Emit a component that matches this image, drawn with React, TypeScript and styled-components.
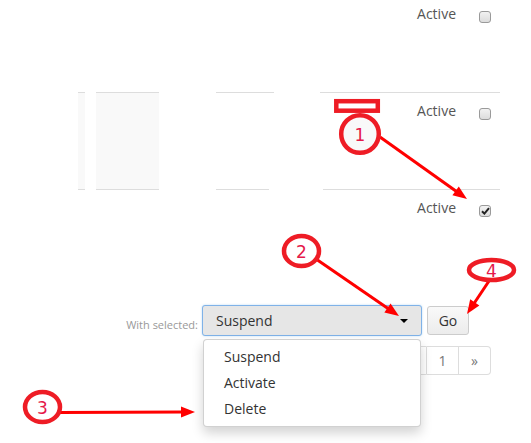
import React from "react";
import styled, { createGlobalStyle } from "styled-components";

const Global = createGlobalStyle`
  html, body { margin: 0; padding: 0; background: #fff; }
  body {
    font-family: "Open Sans", "Liberation Sans", sans-serif;
    color: #333;
    width: 531px;
    height: 443px;
    overflow: hidden;
  }
`;

const Page = styled.div`
  position: relative;
  width: 531px;
  height: 443px;
  overflow: hidden;
`;

const Table = styled.div`
  display: flex;
  flex-direction: column;
`;

const Row = styled.div<{ $h: number }>`
  display: flex;
  height: ${(p) => p.$h}px;
`;

const Segment = styled.div<{ $left: number; $w: number; $line?: boolean; $fill?: boolean }>`
  box-sizing: border-box;
  margin-left: ${(p) => p.$left}px;
  width: ${(p) => p.$w}px;
  border-top: ${(p) => (p.$line ? "1px solid #ddd" : "none")};
  background: ${(p) => (p.$fill ? "#f9f9f9" : "transparent")};
`;

const StatusCell = styled(Segment)<{ $pt: number }>`
  display: flex;
  justify-content: flex-end;
  align-items: flex-start;
  padding: ${(p) => p.$pt}px 9px 0 0;
`;

const Status = styled.span`
  font-size: 14px;
  line-height: 20px;
  color: #555;
`;

const Check = styled.span<{ $checked?: boolean }>`
  box-sizing: border-box;
  display: flex;
  align-items: center;
  justify-content: center;
  width: 12px;
  height: 12px;
  margin: 7px 0 0 23px;
  border: 1px solid #9a9a9a;
  border-radius: 3px;
  background: linear-gradient(#f2f2f2, #dcdcdc);
`;

const FormBar = styled.div`
  display: flex;
  justify-content: flex-end;
  align-items: stretch;
  height: 31px;
  margin-top: 79px;
  padding-right: 62px;
`;

const Label = styled.span`
  align-self: flex-end;
  margin: 0 4px 3px 0;
  font-size: 11px;
  line-height: 16px;
  color: #999;
`;

const SelectWrap = styled.div`
  position: relative;
  width: 220px;
`;

const SelectBox = styled.div`
  box-sizing: border-box;
  display: flex;
  align-items: center;
  justify-content: space-between;
  height: 31px;
  padding: 0 13px;
  border: 1px solid #7fb2e8;
  border-radius: 3px;
  background: #e6e6e6;
  box-shadow: 0 0 2px rgba(102, 175, 233, 0.5);
  font-size: 14px;
  color: #333;
`;

const Caret = styled.span`
  width: 0;
  height: 0;
  border-top: 4px solid #000;
  border-left: 4px solid transparent;
  border-right: 4px solid transparent;
`;

const Menu = styled.ul`
  position: absolute;
  left: 1px;
  top: 34px;
  box-sizing: border-box;
  width: 218px;
  margin: 0;
  padding: 4px 0;
  list-style: none;
  background: #fff;
  border: 1px solid rgba(0, 0, 0, 0.18);
  border-radius: 4px;
  box-shadow: 0 6px 12px rgba(0, 0, 0, 0.175);
  z-index: 2;
`;

const MenuItem = styled.li`
  padding: 3px 20px;
  font-size: 14px;
  line-height: 20px;
  color: #333;
`;

const GoButton = styled.button`
  align-self: center;
  box-sizing: border-box;
  width: 42px;
  height: 29px;
  margin-left: 5px;
  padding: 0;
  border: 1px solid #ccc;
  border-radius: 3px;
  background: linear-gradient(#f9f9f9, #ececec);
  font-family: inherit;
  font-size: 14px;
  color: #333;
`;

const Pagination = styled.div`
  display: flex;
  justify-content: flex-end;
  margin-top: 10px;
  padding-right: 40px;
`;

const PageCell = styled.span<{ $first?: boolean; $last?: boolean }>`
  box-sizing: border-box;
  display: flex;
  align-items: center;
  justify-content: center;
  width: 32px;
  height: 29px;
  border: 1px solid #ddd;
  border-left: ${(p) => (p.$first ? "1px solid #ddd" : "none")};
  border-radius: ${(p) => (p.$first ? "4px 0 0 4px" : p.$last ? "0 4px 4px 0" : "0")};
  font-size: 14px;
  color: #777;
`;

const Overlay = styled.svg`
  position: absolute;
  left: 0;
  top: 0;
  pointer-events: none;
  z-index: 5;
`;

const RED = "#ee1c25";
const NUM = "#e5194a";

function Arrow({ x1, y1, x2, y2 }: { x1: number; y1: number; x2: number; y2: number }) {
  const dx = x2 - x1;
  const dy = y2 - y1;
  const len = Math.hypot(dx, dy);
  const ux = dx / len;
  const uy = dy / len;
  const hl = 14;
  const hw = 5.5;
  const bx = x2 - ux * hl;
  const by = y2 - uy * hl;
  const px = -uy;
  const py = ux;
  const pts = `${x2},${y2} ${bx + px * hw},${by + py * hw} ${bx - px * hw},${by - py * hw}`;
  return (
    <g>
      <line x1={x1} y1={y1} x2={bx + ux * 2} y2={by + uy * 2} stroke="#f00" strokeWidth={3} />
      <polygon points={pts} fill="#f00" />
    </g>
  );
}

function Badge({ cx, cy, rx, ry, n, fill }: { cx: number; cy: number; rx: number; ry: number; n: string; fill?: string }) {
  return (
    <g>
      <ellipse cx={cx} cy={cy} rx={rx} ry={ry} fill={fill ?? "#fff"} stroke={RED} strokeWidth={4.5} />
      <text
        x={cx}
        y={cy + 6.5}
        textAnchor="middle"
        fontFamily="'DejaVu Sans', sans-serif"
        fontSize={17}
        fill={NUM}
      >
        {n}
      </text>
    </g>
  );
}

export default function App() {
  return (
    <Page>
      <Global />
      <Table>
        <Row $h={92}>
          <StatusCell $left={320} $w={180} $pt={4}>
            <Status>Active</Status>
            <Check />
          </StatusCell>
        </Row>
        <Row $h={97}>
          <Segment $left={78} $w={7} $line $fill />
          <Segment $left={11} $w={63} $line $fill />
          <Segment $left={57} $w={58} $line />
          <StatusCell $left={46} $w={180} $pt={8} $line>
            <Status>Active</Status>
            <Check />
          </StatusCell>
        </Row>
        <Row $h={37}>
          <Segment $left={78} $w={7} $line />
          <Segment $left={11} $w={63} $line />
          <Segment $left={57} $w={53} $line />
          <StatusCell $left={54} $w={177} $pt={8} $line>
            <Status>Active</Status>
            <Check $checked>
              <svg width="9" height="8" viewBox="0 0 9 8">
                <path d="M1 4.2 L3.4 6.6 L8 1.2" fill="none" stroke="#222" strokeWidth="2" />
              </svg>
            </Check>
          </StatusCell>
        </Row>
      </Table>

      <FormBar>
        <Label>With selected:</Label>
        <SelectWrap>
          <SelectBox>
            <span>Suspend</span>
            <Caret />
          </SelectBox>
          <Menu>
            <MenuItem>Suspend</MenuItem>
            <MenuItem>Activate</MenuItem>
            <MenuItem>Delete</MenuItem>
          </Menu>
        </SelectWrap>
        <GoButton>Go</GoButton>
      </FormBar>

      <Pagination>
        <PageCell $first>«</PageCell>
        <PageCell>1</PageCell>
        <PageCell $last>»</PageCell>
      </Pagination>

      <Overlay width={531} height={443} viewBox="0 0 531 443">
        <rect x={336.3} y={101.2} width={41.5} height={9.5} fill="#fff" stroke={RED} strokeWidth={4.5} />
        <Arrow x1={380} y1={137} x2={467} y2={199} />
        <Badge cx={360} cy={134} rx={18.8} ry={18.8} n="1" fill="#f9f9f9" />
        <Arrow x1={316} y1={259} x2={399} y2={316} />
        <Badge cx={301.5} cy={251} rx={17.5} ry={15} n="2" />
        <Arrow x1={489} y1={281} x2={467} y2={314} />
        <Badge cx={491.5} cy={270} rx={22.5} ry={10} n="4" />
        <Arrow x1={60} y1={412.5} x2={195} y2={412} />
        <Badge cx={42.5} cy={407} rx={17.5} ry={15} n="3" />
      </Overlay>
    </Page>
  );
}
